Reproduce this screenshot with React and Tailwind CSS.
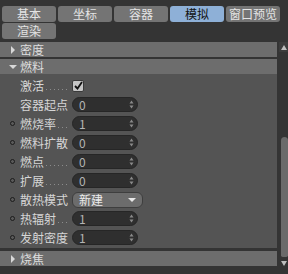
import React from "react";

const FONT = { fontFamily: "'Noto Sans CJK SC', 'Noto Sans', sans-serif" };

const tabs = [
  { name: "基本" },
  { name: "坐标" },
  { name: "容器" },
  { name: "模拟", active: true },
  { name: "窗口预览" },
  { name: "渲染" },
];

// kind: check | num | select ; dot: small ring left of label ; lead: dotted leader
const rows = [
  { label: "激活", kind: "check", lead: true },
  { label: "容器起点", kind: "num", value: "0" },
  { label: "燃烧率", kind: "num", value: "1", dot: true, lead: true },
  { label: "燃料扩散", kind: "num", value: "0", dot: true },
  { label: "燃点", kind: "num", value: "0", dot: true, lead: true },
  { label: "扩展", kind: "num", value: "0", dot: true, lead: true },
  { label: "散热模式", kind: "select", value: "新建", dot: true },
  { label: "热辐射", kind: "num", value: "1", dot: true, lead: true },
  { label: "发射密度", kind: "num", value: "1", dot: true },
];

function Header({ title, open }) {
  return (
    <div className="h-[15px] bg-[#6d6d6d] flex items-center text-[#dedede] text-[12px] leading-[15px]">
      <span className="w-[20px] flex justify-center pl-[6px]">
        {open ? (
          <svg width="8" height="6" viewBox="0 0 8 6"><path d="M0 1h8L4 5z" fill="#d8d8d8" /></svg>
        ) : (
          <svg width="6" height="8" viewBox="0 0 6 8"><path d="M1 0v8l4-4z" fill="#d8d8d8" /></svg>
        )}
      </span>
      <span>{title}</span>
    </div>
  );
}

function Spinner() {
  return (
    <svg width="5" height="9" viewBox="0 0 5 9" className="absolute right-[3px] top-[2px]">
      <path d="M0.5 3.5h4L2.5 0.5z M0.5 5.5h4L2.5 8.5z" fill="#8a8a8a" />
    </svg>
  );
}

function Row({ r }) {
  return (
    <div className="h-[19px] flex items-center">
      <div className="w-[20px] flex justify-end pr-[5px]">
        {r.dot && <span className="w-[5px] h-[5px] rounded-full border border-[#1c1c1c] bg-[#5a5a5a]" />}
      </div>
      <div className="w-[52px] flex items-end text-[12px] leading-none text-[#d6d6d6] pr-[4px]">
        <span className="whitespace-nowrap">{r.label}</span>
        {r.lead && (
          <span className="flex-1 h-[1px] mb-[2px] ml-[2px] bg-[linear-gradient(to_right,#8c8c8c_1px,transparent_1px)] bg-[length:4px_1px] bg-repeat-x" />
        )}
      </div>
      {r.kind === "check" && (
        <div className="w-[12px] h-[12px] rounded-[2px] bg-[#c4c4c4] border border-[#3a3a3a] flex items-center justify-center">
          <svg width="9" height="9" viewBox="0 0 9 9">
            <path d="M1 5l2.5 2.5L8 1" stroke="#111" strokeWidth="1.8" fill="none" />
          </svg>
        </div>
      )}
      {r.kind === "num" && (
        <div className="relative w-[66px] h-[15px] rounded-full bg-[#2f2f2f] border border-[#262626] flex items-center pl-[6px] text-[12px] leading-none text-[#b4b4b4]">
          {r.value}
          <Spinner />
        </div>
      )}
      {r.kind === "select" && (
        <div className="relative w-[71px] h-[16px] rounded-[6px] bg-[#6c6c6c] border border-[#3e3e3e] flex items-center pl-[6px] text-[12px] leading-none text-[#ececec]">
          {r.value}
          <svg width="8" height="5" viewBox="0 0 8 5" className="absolute right-[6px] top-[5px]">
            <path d="M0 0h8L4 4z" fill="#e8e8e8" />
          </svg>
        </div>
      )}
    </div>
  );
}

export default function App() {
  return (
    <div className="w-[288px] h-[274px] bg-[#343434] overflow-hidden" style={FONT}>
      <div className="pt-[6px] pl-[2px] grid grid-cols-[54px_54px_54px_54px_54px] gap-x-[2px] gap-y-[1px]">
        {tabs.map((t) => (
          <div
            key={t.name}
            className={
              "h-[16px] rounded-[3px] text-center text-[12px] leading-[16px] " +
              (t.active ? "bg-[#8eb0d7] text-[#111]" : "bg-[#747474] text-[#e4e4e4]")
            }
          >
            {t.name}
          </div>
        ))}
      </div>

      <div className="mt-[3px] flex">
        <div className="w-[277px] flex flex-col">
          <Header title="密度" />
          <div className="h-[2px]" />
          <Header title="燃料" open />
          <div className="h-[174px] bg-[#545454] pt-[2px]">
            {rows.map((r) => (
              <Row key={r.label} r={r} />
            ))}
          </div>
          <div className="h-[3px]" />
          <Header title="烧焦" />
        </div>
        <div className="w-[2px]" />
        <div className="w-[9px] h-[225px] flex flex-col">
          <div className="h-[10px] flex items-center justify-center bg-[#3c3c3c]">
            <svg width="6" height="5" viewBox="0 0 6 5"><path d="M0 5h6L3 0z" fill="#bdbdbd" /></svg>
          </div>
          <div className="flex-1 pl-[2px] pt-[85px] pb-[2px]">
            <div className="h-full rounded-t-[4px] rounded-b-[2px] bg-[#6a6a6a]" />
          </div>
          <div className="h-[8px] flex items-center justify-center">
            <svg width="6" height="5" viewBox="0 0 6 5"><path d="M0 0h6L3 5z" fill="#bdbdbd" /></svg>
          </div>
        </div>
      </div>
    </div>
  );
}
